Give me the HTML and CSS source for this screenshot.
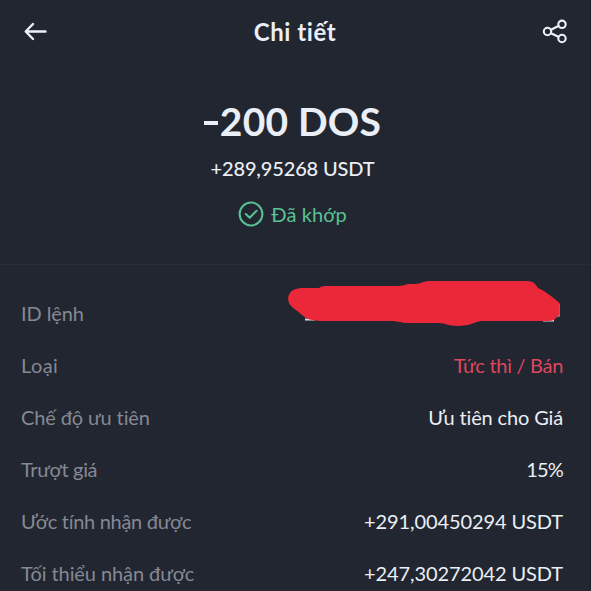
FILE: index.html
```
<!DOCTYPE html>
<html lang="vi">
<head>
<meta charset="utf-8">
<title>Chi tiết</title>
<link rel="stylesheet" href="styles.css">
</head>
<body>
<main class="screen">
  <header class="topbar">
    <svg class="icon" width="28" height="28" viewBox="0 0 28 28"><path d="M25.5 14.5H6M13 7L5.7 14.5L13 22"/></svg>
    <h1 class="title">Chi tiết</h1>
    <svg class="icon share" width="28" height="28" viewBox="0 0 28 28"><circle cx="7.5" cy="14.5" r="3.7"/><circle cx="22" cy="7.3" r="3.7"/><circle cx="22" cy="21.5" r="3.7"/><path d="M11 12.7L18.4 9M11 16.3L18.4 19.8"/></svg>
  </header>
  <section class="summary">
    <div class="amount"><span class="minus"></span><span class="amount-text">200 DOS</span></div>
    <div class="received">+289,95268 USDT</div>
    <div class="status">
      <svg class="check" width="26" height="26" viewBox="0 0 26 26"><circle cx="13" cy="13" r="11.4"/><path d="M7.8 13L11.7 16.8L18.6 9.7"/></svg>
      <span class="status-text">Đã khớp</span>
    </div>
  </section>
  <section class="details">
    <div class="row"><span class="label l1">ID lệnh</span>
      <svg class="redaction" width="274" height="48" viewBox="0 0 274 48"><path class="remnant" d="M18 38.5H28V40.5H18ZM256 39H267V41.5H256ZM268 24H272.5V36.5H268Z"/><path class="stroke" d="M14 8H32Q34 6 39 6H111Q116 6 121 4C129 4 132 4 136 2Q139 1 143 1H240C247 1 248 4 251 8C258 11 264 16 269 20L272.5 23V34C272 36 271 36 269 38Q267 41 262 41H194C187 42 183 46 171 46C160 46 159 43 152 43H120C115 43 111 41 103 41H38C24 41 19 39 14 34L5 27Q1 23 1 18Q2 9 14 8Z"/></svg>
    </div>
    <div class="row"><span class="label l2">Loại</span><span class="value sell">Tức thì / Bán</span></div>
    <div class="row"><span class="label l3">Chế độ ưu tiên</span><span class="value v3">Ưu tiên cho Giá</span></div>
    <div class="row"><span class="label l4">Trượt giá</span><span class="value v4">15%</span></div>
    <div class="row"><span class="label l5">Ước tính nhận được</span><span class="value v5">+291,00450294 USDT</span></div>
    <div class="row"><span class="label l6">Tối thiểu nhận được</span><span class="value v5">+247,30272042 USDT</span></div>
  </section>
</main>
</body>
</html>
```
FILE: styles.css
```
* { box-sizing: border-box; }
body { margin: 0; background: #222630; }
.screen {
  width: 591px; height: 591px; overflow: hidden;
  background: #222630; border-right: 1px solid #1c1e29;
  color: #eaeef6; font-family: Lato, "Open Sans", sans-serif;
  font-variant-ligatures: none;
}
.topbar {
  height: 64px; padding: 0 22px 0 20px;
  display: flex; align-items: center; justify-content: space-between;
}
.icon { fill: none; stroke: #eef1f7; stroke-width: 2.4; stroke-linecap: round; stroke-linejoin: round; margin-top: -2px; }
.share { stroke-width: 2.1; }
.title { margin: 0 -2px 0 0; font-size: 24px; line-height: 32px; font-weight: 700; letter-spacing: 0.55px; }
.summary { height: 200px; padding: 33px 5px 0 0; display: flex; flex-direction: column; align-items: center; }
.amount { display: flex; align-items: center; gap: 2px; height: 48px; font-size: 39px; line-height: 48px; font-weight: 700; letter-spacing: 0.2px; }
.minus { width: 14px; height: 4px; background: #eaeef6; margin-top: 3px; }
.received { margin-top: 9px; font-size: 20px; line-height: 28px; font-weight: 500; letter-spacing: -0.15px; }
.status { margin-top: 18px; height: 28px; display: flex; align-items: center; gap: 7px; color: #59c294; font-size: 20px; letter-spacing: 0.1px; }
.check { fill: none; stroke: #59c294; stroke-width: 2; stroke-linecap: round; stroke-linejoin: round; }
.details { border-top: 1px solid #292d37; padding: 22px 27px 0 21px; }
.row { height: 52px; display: flex; align-items: center; justify-content: space-between; font-size: 20px; line-height: 28px; white-space: nowrap; }
.label { color: #858994; }
.l1 { letter-spacing: -0.1px; }
.l2 { letter-spacing: 0.4px; }
.l3 { letter-spacing: -0.12px; }
.l4 { letter-spacing: -0.35px; }
.l5 { letter-spacing: -0.3px; }
.l6 { letter-spacing: -0.08px; }
.sell { color: #df475d; letter-spacing: -0.3px; }
.v3 { letter-spacing: -0.15px; }
.v4 { letter-spacing: -0.8px; }
.v5 { letter-spacing: -0.1px; }
.redaction { margin: -19px 2px 0 0; }
.stroke { fill: #eb283a; }
.remnant { fill: #d9dde3; }
```
